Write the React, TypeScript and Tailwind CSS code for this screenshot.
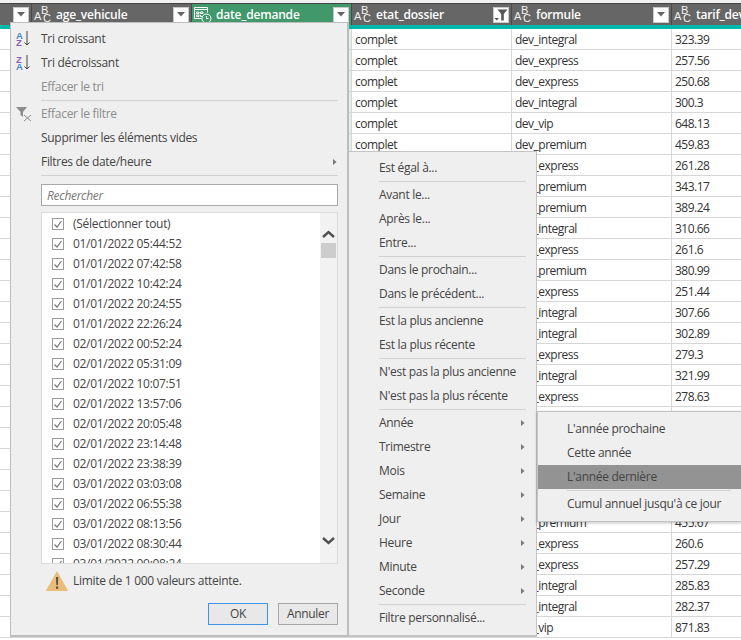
import React from "react";

const FONT = "font-['Open_Sans','Noto_Sans',sans-serif]";

const formules = [
  "integral", "express", "express", "integral", "vip", "premium", "express", "premium", "premium", "integral",
  "express", "premium", "express", "integral", "integral", "express", "integral", "express", "premium", "express",
  "integral", "express", "premium", "premium", "express", "express", "integral", "integral", "vip",
];
const tarifs = [
  "323.39", "257.56", "250.68", "300.3", "648.13", "459.83", "261.28", "343.17", "389.24", "310.66",
  "261.6", "380.99", "251.44", "307.66", "302.89", "279.3", "321.99", "278.63", "402.11", "266.4",
  "318.72", "254.9", "436.5", "455.67", "260.6", "257.29", "285.83", "282.37", "871.83",
];
const dates = [
  "01/01/2022 05:44:52", "01/01/2022 07:42:58", "01/01/2022 10:42:24", "01/01/2022 20:24:55", "01/01/2022 22:26:24",
  "02/01/2022 00:52:24", "02/01/2022 05:31:09", "02/01/2022 10:07:51", "02/01/2022 13:57:06", "02/01/2022 20:05:48",
  "02/01/2022 23:14:48", "02/01/2022 23:38:39", "03/01/2022 03:03:08", "03/01/2022 06:55:38", "03/01/2022 08:13:56",
  "03/01/2022 08:30:44", "03/01/2022 09:08:24",
];

function AbcIcon() {
  return (
    <span className="relative block w-[16px] h-[18px] mr-[6px] shrink-0 text-[#f2f2f2] text-[11px] leading-none tracking-normal font-['Liberation_Sans',sans-serif]">
      <span className="absolute left-0 top-[5px]">A</span>
      <span className="absolute left-[7px] top-[-1px]">B</span>
      <span className="absolute left-[9px] top-[7px]">C</span>
    </span>
  );
}

function DateTimeIcon() {
  return (
    <svg width="18" height="18" viewBox="0 0 18 18" fill="none" stroke="#fff" strokeWidth="1" className="shrink-0 mr-[4px]">
      <path d="M.5 1.500h13v2h-13zM.5 3.500v9h7M13.500 3.500v3" />
      <path d="M2.500 6v1.500H5V6zM6.500 6v1.500H9V6zM2.500 9v1.500H5V9zM6.500 9v1.500H8" />
      <circle cx="12.500" cy="12.500" r="4.500" />
      <path d="M12.500 10v2.600h2" />
    </svg>
  );
}

function HeaderButton({ filtered }: { filtered?: boolean }) {
  return (
    <span className="w-4 h-4 bg-white border border-[#c8c8c8] flex items-center justify-center shrink-0">
      {filtered ? (
        <svg width="14" height="14" viewBox="0 0 14 14">
          <path d="M3.500 1.500h10L9.800 6v6.500H7.200V6z" fill="#555" />
          <path d="M.5 10h4.500l-2.250 2.500z" fill="#555" />
        </svg>
      ) : (
        <svg width="8" height="5" viewBox="0 0 8 5">
          <path d="M0 0h8L4 4.500z" fill="#666" />
        </svg>
      )}
    </span>
  );
}

function HeaderCell({ name, filtered, active, icon }: { name: string; filtered?: boolean; active?: boolean; icon?: React.ReactNode }) {
  return (
    <div className={`w-40 shrink-0 h-[21px] flex items-center pl-[2px] pr-[2px] border-r border-[#4a4a4a] ${active ? "bg-[#41986a]" : "bg-[#666666]"}`}>
      {icon ?? <AbcIcon />}
      <span className="flex-1 text-[12px] font-semibold text-white whitespace-nowrap overflow-hidden tracking-[-0.2px]">{name}</span>
      <HeaderButton filtered={filtered} />
    </div>
  );
}

function Row({ i }: { i: number }) {
  const cell = "shrink-0 w-40 h-[21px] border-r border-b border-[#d6d6d6] pl-[3px] leading-[22px] whitespace-nowrap overflow-hidden";
  return (
    <div className="flex text-[12px] text-[#333] tracking-[-0.5px]">
      <div className="shrink-0 w-8 h-[21px] border-r border-b border-[#d6d6d6]" />
      <div className={cell} />
      <div className={`${cell} bg-[#e1f0e8]`} />
      <div className={cell}>complet</div>
      <div className={cell}>dev_{formules[i]}</div>
      <div className={cell}>{tarifs[i]}</div>
    </div>
  );
}

function Separator({ className }: { className: string }) {
  return (
    <div className={`h-[3px] shrink-0 flex items-center ${className}`}>
      <div className="h-px w-full bg-[#d2d2d2]" />
    </div>
  );
}

function Item({ label, disabled, arrow, icon, pad, hover }: { label: string; disabled?: boolean; arrow?: boolean; icon?: React.ReactNode; pad: string; hover?: boolean }) {
  return (
    <div className={`relative h-6 shrink-0 flex items-center whitespace-nowrap ${pad} ${disabled ? "text-[#8c8c8c]" : "text-[#444]"} ${hover ? "bg-[#939393]" : ""}`}>
      {icon && <span className="absolute left-[5px] top-[4px]">{icon}</span>}
      {label}
      {arrow && (
        <svg width="4" height="6" viewBox="0 0 4 6" className="absolute right-px top-[9px]">
          <path d="M0 0l3.500 3L0 6z" fill="#777" />
        </svg>
      )}
    </div>
  );
}

function SortIcon({ down }: { down?: boolean }) {
  return (
    <span className="relative block w-[16px] h-[16px] text-[9.5px] font-bold leading-none tracking-normal font-['Liberation_Sans',sans-serif]">
      <span className={`absolute left-0 top-0 ${down ? "text-[#8c5fb5]" : "text-[#4a86c8]"}`}>{down ? "Z" : "A"}</span>
      <span className={`absolute left-0 top-[7px] ${down ? "text-[#4a86c8]" : "text-[#8c5fb5]"}`}>{down ? "A" : "Z"}</span>
      <svg width="6" height="15" viewBox="0 0 6 15" className="absolute left-[8px] top-0">
        <path d="M3 0v14M.5 11.500L3 14l2.500-2.500" stroke="#444" fill="none" />
      </svg>
    </span>
  );
}

function ClearFilterIcon() {
  return (
    <svg width="17" height="16" viewBox="0 0 17 16">
      <path d="M0 1h11L7 6v5L4.500 9V6z" fill="#8c8c8c" />
      <path d="M8 9l7 6M15 9l-7 6" stroke="#8c8c8c" fill="none" />
    </svg>
  );
}

function CheckRow({ label }: { label: string }) {
  return (
    <div className="h-5 flex items-center pl-[10px] shrink-0 whitespace-nowrap">
      <span className="w-3 h-3 border border-[#9a9a9a] bg-white flex items-center justify-center mr-[9px]">
        <svg width="10" height="10" viewBox="0 0 10 10">
          <path d="M1.500 5.500L4 8l4.500-6" stroke="#777" strokeWidth="1.200" fill="none" />
        </svg>
      </span>
      {label}
    </div>
  );
}

function FilterMenu() {
  return (
    <div className="absolute left-[10px] top-[22px] w-[339px] h-[615px] bg-[#efefef] border border-[#bdbdbd] border-r-2 border-b-2 pt-[4px] flex flex-col">
      <Item pad="pl-[30px]" label="Tri croissant" icon={<SortIcon />} />
      <Item pad="pl-[30px]" label="Tri décroissant" icon={<SortIcon down />} />
      <Item pad="pl-[30px]" label="Effacer le tri" disabled />
      <Separator className="ml-[30px] mr-[9px]" />
      <Item pad="pl-[30px]" label="Effacer le filtre" disabled icon={<ClearFilterIcon />} />
      <Item pad="pl-[30px]" label="Supprimer les éléments vides" />
      <Item pad="pl-[30px] mr-[9px]" label="Filtres de date/heure" arrow />
      <Separator className="ml-[30px] mr-[9px]" />
      <div className="mt-[7px] ml-[30px] mr-[9px] h-[22px] shrink-0 bg-white border border-[#a8a8a8] pl-[5px] leading-[21px] italic text-[#777]">Rechercher</div>
      <div className="mt-[6px] ml-[30px] mr-[9px] h-[352px] shrink-0 flex border border-[#dcdcdc] bg-white">
        <div className="flex-1 overflow-hidden flex flex-col pt-px text-[#444]">
          <CheckRow label="(Sélectionner tout)" />
          {dates.map((d) => (
            <CheckRow key={d} label={d} />
          ))}
        </div>
        <div className="w-[17px] bg-[#f2f2f2] flex flex-col items-center">
          <svg width="13" height="8" viewBox="0 0 13 8" className="mt-[17px]">
            <path d="M1 7l5.500-5L12 7" stroke="#505050" strokeWidth="2.400" fill="none" />
          </svg>
          <div className="w-[15px] h-[15px] bg-[#cdcdcd] mt-[5px]" />
          <div className="flex-1" />
          <svg width="13" height="8" viewBox="0 0 13 8" className="mb-[18px]">
            <path d="M1 1l5.500 5L12 1" stroke="#505050" strokeWidth="2.400" fill="none" />
          </svg>
        </div>
      </div>
      <div className="mt-[5px] ml-[34px] h-[24px] flex items-center text-[#444]">
        <svg width="24" height="22" viewBox="0 0 24 22" className="mr-[4px]">
          <path d="M12 1L23 20.500a.5.5 0 0 1-.5.5H1.500a.5.500 0 0 1-.5-.5z" fill="#e8bd7a" />
          <path d="M11 7h2.200l-.3 8h-1.600zM11 16.500h2.200v2.200H11z" fill="#5a5040" />
        </svg>
        Limite de 1 000 valeurs atteinte.
      </div>
      <div className="mt-[10px] mr-[9px] flex justify-end gap-[10px]">
        <button className="w-[60px] h-[22px] bg-[#e8e8e8] border border-[#3f94e6] text-[#444]">OK</button>
        <button className="w-[60px] h-[22px] bg-[#e8e8e8] border border-[#a8a8a8] text-[#444]">Annuler</button>
      </div>
    </div>
  );
}

function DateMenu() {
  const pad = "pl-[30px]";
  const sep = "ml-[30px] mr-[10px]";
  return (
    <div className="absolute left-[349px] top-[151px] w-[188px] h-[486px] bg-[#efefef] border-r border-b-2 border-t border-[#c4c4c4] pt-[4px] flex flex-col">
      <Item pad={pad} label="Est égal à..." />
      <Separator className={sep} />
      <Item pad={pad} label="Avant le..." />
      <Item pad={pad} label="Après le..." />
      <Item pad={pad} label="Entre..." />
      <Separator className={sep} />
      <Item pad={pad} label="Dans le prochain..." />
      <Item pad={pad} label="Dans le précédent..." />
      <Separator className={sep} />
      <Item pad={pad} label="Est la plus ancienne" />
      <Item pad={pad} label="Est la plus récente" />
      <Separator className={sep} />
      <Item pad={pad} label="N'est pas la plus ancienne" />
      <Item pad={pad} label="N'est pas la plus récente" />
      <Separator className={sep} />
      {["Année", "Trimestre", "Mois", "Semaine", "Jour", "Heure", "Minute", "Seconde"].map((l) => (
        <Item key={l} pad={`${pad} mr-[10px]`} label={l} arrow />
      ))}
      <Separator className={sep} />
      <Item pad={pad} label="Filtre personnalisé..." />
    </div>
  );
}

function YearMenu() {
  return (
    <div className="absolute left-[537px] top-[411px] w-[204px] h-[111px] bg-[#efefef] border-t border-b border-l border-[#c4c4c4] pt-[5px] shadow-[0_1px_3px_rgba(0,0,0,0.25)] flex flex-col">
      <Item pad="pl-[29px]" label="L'année prochaine" />
      <Item pad="pl-[29px]" label="Cette année" />
      <Item pad="pl-[29px]" label="L'année dernière" hover />
      <Separator className="ml-[29px] mr-[10px]" />
      <Item pad="pl-[29px]" label="Cumul annuel jusqu'à ce jour" />
    </div>
  );
}

export default function App() {
  return (
    <div className={`relative w-[741px] h-[640px] overflow-hidden bg-white text-[12px] tracking-[-0.3px] ${FONT}`}>
      <div className="h-[3px] bg-[#f0f0f0]" />
      <div className="h-px bg-[#444]" />
      <div className="flex">
        <div className="w-8 shrink-0 h-[21px] bg-[#666666] border-r border-[#4a4a4a] flex items-center justify-end pr-[2px]">
          <HeaderButton />
        </div>
        <HeaderCell name="age_vehicule" />
        <HeaderCell name="date_demande" active icon={<DateTimeIcon />} />
        <HeaderCell name="etat_dossier" filtered />
        <HeaderCell name="formule" />
        <HeaderCell name="tarif_dev" />
      </div>
      <div className="h-1 bg-[#01b8aa]" />
      {formules.map((_, i) => (
        <Row key={i} i={i} />
      ))}
      <FilterMenu />
      <DateMenu />
      <YearMenu />
    </div>
  );
}
